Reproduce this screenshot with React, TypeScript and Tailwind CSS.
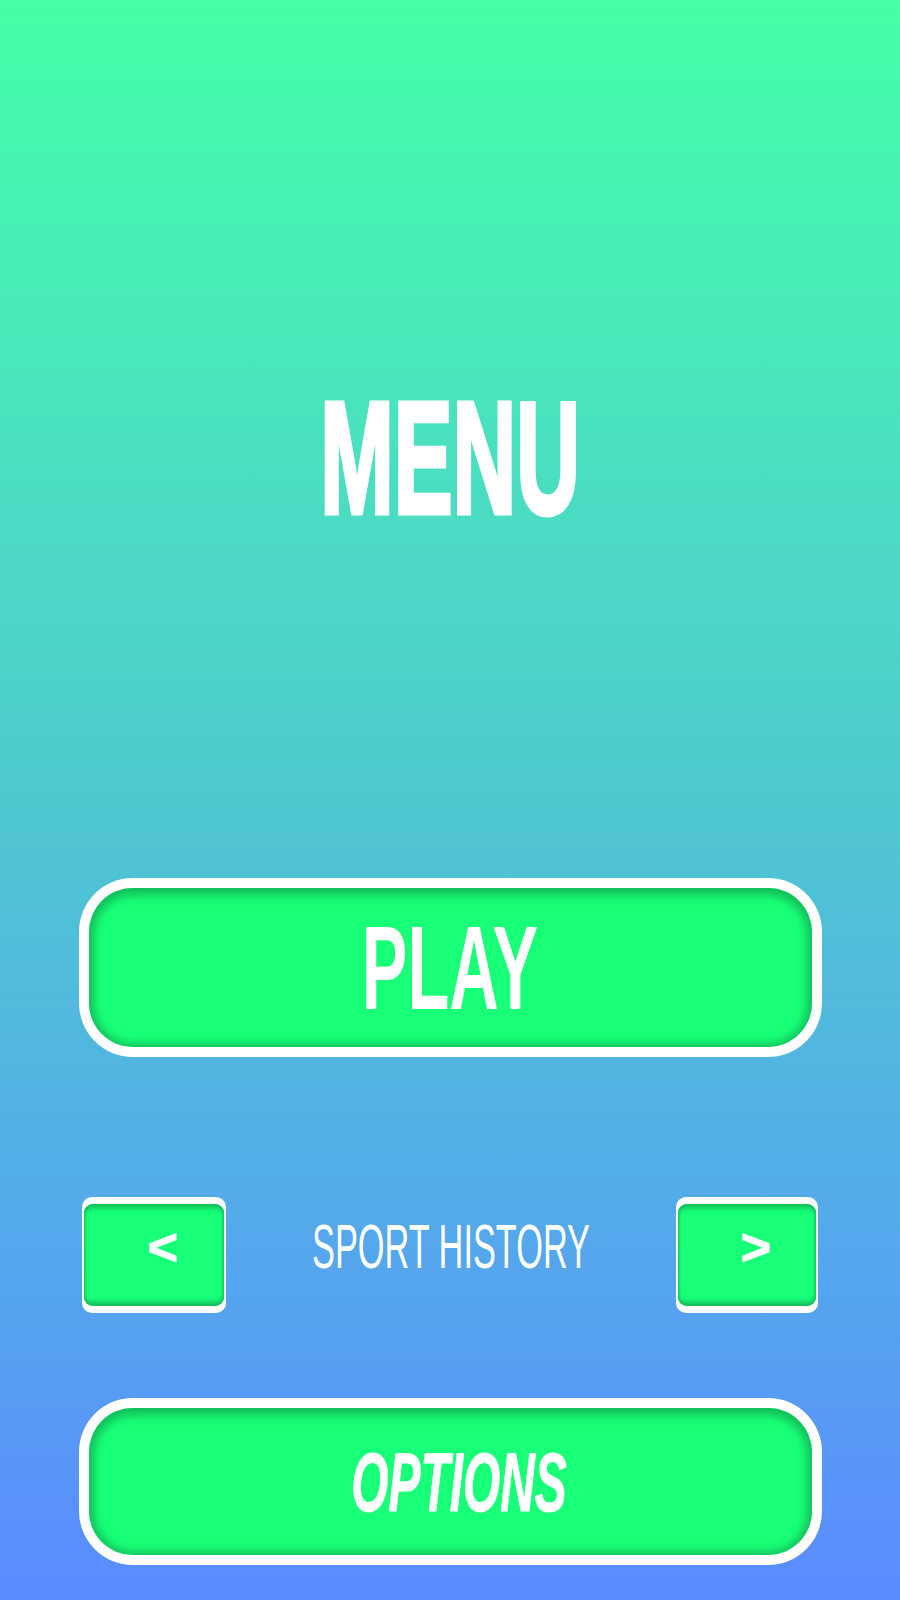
import React from "react";

const sans = '"Liberation Sans", Arial, sans-serif';

function BigButton({ children }: { children: React.ReactNode }) {
  return (
    <div className="h-full w-[743px] rounded-[54px] bg-white p-[10px]">
      <div className="flex h-full w-full items-center justify-center rounded-[44px] bg-[#18FF78] shadow-[inset_0_2px_10px_5px_#13BC59]">
        {children}
      </div>
    </div>
  );
}

function SmallButton({ children, w }: { children: React.ReactNode; w: string }) {
  return (
    <div className={`${w} h-[116px] shrink-0 rounded-[10px] bg-white px-[2px] py-[7px]`}>
      <div className="flex h-full w-full items-start justify-center rounded-[9px] bg-[#18FF78] pl-[18px] pt-[17px] shadow-[inset_0_7px_5px_-3px_#13BC59,inset_0_-7px_5px_-3px_#13BC59,inset_3px_0_3px_-2px_#13BC59,inset_-3px_0_3px_-2px_#13BC59]">
        {children}
      </div>
    </div>
  );
}

export default function App() {
  return (
    <div className="flex h-[1600px] w-full flex-col items-center overflow-hidden bg-gradient-to-b from-[#44FFA6] via-[#4EC8CF] to-[#5A8AFF]">
      <div className="mt-[380px] flex h-[156px] items-center justify-center">
        <span
          className="block scale-x-[0.555] text-[159px] font-bold leading-none text-white [-webkit-text-stroke:5px_white]"
          style={{ fontFamily: sans }}
        >
          MENU
        </span>
      </div>

      <div className="mt-[342px] h-[179px]">
        <BigButton>
          <span
            className="block scale-x-[0.58] text-[118px] font-bold leading-none text-white"
            style={{ fontFamily: sans }}
          >
            PLAY
          </span>
        </BigButton>
      </div>

      <div className="mt-[140px] flex h-[116px] w-[736px] items-start justify-between">
        <SmallButton w="w-[144px]">
          <span
            className="block text-[52px] font-bold leading-none text-white [-webkit-text-stroke:1px_white]"
            style={{ fontFamily: sans }}
          >
            &lt;
          </span>
        </SmallButton>
        <div className="flex h-[98px] min-w-0 flex-1 items-center justify-center">
          <span
            className="block scale-x-[0.545] whitespace-nowrap text-[63px] font-normal leading-none text-white"
            style={{ fontFamily: sans }}
          >
            SPORT HISTORY
          </span>
        </div>
        <SmallButton w="w-[142px]">
          <span
            className="block text-[52px] font-bold leading-none text-white [-webkit-text-stroke:1px_white]"
            style={{ fontFamily: sans }}
          >
            &gt;
          </span>
        </SmallButton>
      </div>

      <div className="mt-[85px] h-[167px]">
        <BigButton>
          <span
            className="ml-[18px] block scale-x-[0.57] text-[84px] font-bold italic leading-none text-white [-webkit-text-stroke:1px_white]"
            style={{ fontFamily: sans }}
          >
            OPTIONS
          </span>
        </BigButton>
      </div>
    </div>
  );
}
